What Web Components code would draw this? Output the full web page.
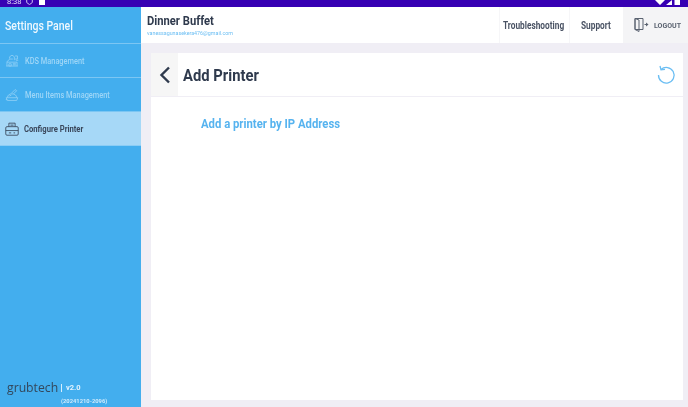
<!DOCTYPE html>
<html>
<head>
<meta charset="utf-8">
<title>Add Printer</title>
<style>
  html, body { margin: 0; height: 100%; }
  body { font-family: Roboto, "Liberation Sans", sans-serif; overflow: hidden; }
</style>
</head>
<body>
<settings-app>
  <status-bar slot="status"></status-bar>
  <side-panel slot="side">
    <side-item icon="kds">KDS Management</side-item>
    <side-item icon="menu">Menu Items Management</side-item>
    <side-item icon="printer" active>Configure Printer</side-item>
  </side-panel>
  <top-bar slot="top"></top-bar>
  <printer-card slot="main"></printer-card>
</settings-app>

<script>
// the reference is a squeezed, slightly soft capture: narrow text uses .nr spans
const NARROW = `.nr { display: inline-block; transform-origin: 0 50%; white-space: nowrap; }`;

class SettingsApp extends HTMLElement {
  connectedCallback() {
    this.attachShadow({ mode: 'open' });
    this.shadowRoot.innerHTML = `
      <style>
        :host { display: grid; grid-template-columns: 141px 1fr; grid-template-rows: 7px 36px 1fr; width: 688px; height: 407px; background: #f0eef5; filter: blur(.35px); }
        .status { grid-column: 1 / 3; }
        .side { grid-row: 2 / 4; display: flex; min-height: 0; }
        .main { display: flex; padding: 10px 5px 7px 10px; min-height: 0; }
      </style>
      <div class="status"><slot name="status"></slot></div>
      <div class="side"><slot name="side"></slot></div>
      <slot name="top"></slot>
      <div class="main"><slot name="main"></slot></div>
    `;
  }
}
customElements.define('settings-app', SettingsApp);

class StatusBar extends HTMLElement {
  connectedCallback() {
    this.attachShadow({ mode: 'open' });
    this.shadowRoot.innerHTML = `
      <style>
        :host { display: flex; height: 7px; background: #3700b3; color: #e6dcf8; justify-content: space-between; align-items: flex-start; overflow: hidden; font-size: 7.500px; line-height: 7px; padding: 0 8px 0 7px; box-sizing: border-box; }
        .left { display: flex; align-items: flex-start; height: 7px; flex: none; }
        .time { width: 19px; margin-top: -2px; }
        svg { display: block; }
        .sq { width: 6px; height: 5px; background: #fff; margin-left: 6px; }
      </style>
      <div class="left">
        <span class="time">8:38</span>
        <svg width="7" height="5" viewBox="0 0 7 5"><path d="M.7 0v2.500L3.500 4.600 6.300 2.500V0" fill="none" stroke="#cdbdf0" stroke-width="1"/></svg>
        <div class="sq"></div>
      </div>
      <svg width="25" height="5" viewBox="0 0 25 5"><path d="M0 0h10L5 5zM11 5l6-5v5zM19.500 0h5.500v5h-5.500z" fill="#fff"/></svg>
    `;
  }
}
customElements.define('status-bar', StatusBar);

class SidePanel extends HTMLElement {
  connectedCallback() {
    this.attachShadow({ mode: 'open' });
    this.shadowRoot.innerHTML = `
      <style>
        ${NARROW}
        :host { display: flex; flex-direction: column; width: 141px; background: #43aeee; color: #fff; }
        h1 { margin: 0; height: 36px; padding-left: 5px; font-size: 12.500px; line-height: 37px; font-weight: 500; color: #eef8fe; border-bottom: 1px solid #7cc6f3; }
        h1 .nr { transform: scaleX(.84); }
        nav { flex: 1; display: flex; flex-direction: column; }
        footer { padding: 0 0 1px 7px; }
        .brand { display: flex; align-items: center; height: 17px; }
        .logo { font-family: "Open Sans", sans-serif; font-size: 13px; color: #33475b; line-height: 17px; width: 53px; display: inline-block; transform: scaleX(.94); transform-origin: 0 50%; }
        .bar { width: 1px; height: 8px; background: #d5eefd; margin: 0 4px 0 1px; }
        .ver { font-size: 7.500px; font-weight: 700; color: #e4f4fe; line-height: 9px; }
        .build { font-size: 5.800px; font-weight: 700; color: #cfeafc; padding-left: 54px; line-height: 9px; margin-top: 1px; }
      </style>
      <h1><span class="nr">Settings Panel</span></h1>
      <nav><slot></slot></nav>
      <footer>
        <div class="brand"><span class="logo">grubtech</span><span class="bar"></span><span class="ver">v2.0</span></div>
        <div class="build">(20241210-2096)</div>
      </footer>
    `;
  }
}
customElements.define('side-panel', SidePanel);

const SIDE_ICONS = {
  kds: '<path d="M1.500 15.500h15M2.500 15.500v-5h13v5M2 10.500l4-4h4M5 12.500h3v3H5zM10 12.500h4M10 14h4M6 6V3.500l3-2 3 2V8M13 2.500h3v4h-3M14 8h3"/>',
  menu: '<path d="M1.500 12.500h15l-1.500 3.500H3zM3 12.500c0-3 2.500-5 6-5s6 2 6 5M8 7l5-5 2 1.500-4 4M5 11c.5-1 1.500-1.500 3-1.500M1 15h2"/>',
  printer: '<path d="M5 6V1.500h8V6M2.500 6h13a1.500 1.500 0 0 1 1.500 1.500v8a1.500 1.500 0 0 1-1.500 1.500h-13A1.500 1.500 0 0 1 1 15.500v-8A1.500 1.500 0 0 1 2.500 6zM1 11h16M7 4h4M5 14h3M11 14h2"/>'
};

class SideItem extends HTMLElement {
  connectedCallback() {
    const active = this.hasAttribute('active');
    this.attachShadow({ mode: 'open' });
    this.shadowRoot.innerHTML = `
      <style>
        ${NARROW}
        :host { display: flex; align-items: center; height: 33px; gap: ${active ? 5 : 6}px; padding-left: 5px; border-bottom: 1px solid ${active ? '#8bcdf5' : '#7cc6f3'}; background: ${active ? '#a6d8f7' : 'transparent'}; color: ${active ? '#39465a' : '#9ed6f7'}; font-size: 8.500px; font-weight: ${active ? 700 : 500}; white-space: nowrap; }
        svg { width: 14px; height: 14px; flex: none; fill: none; stroke: ${active ? '#39465a' : '#8ecff6'}; stroke-width: 1.100; }
        .nr { transform: scaleX(${active ? .9 : .87}); }
      </style>
      <svg viewBox="0 0 18 18">${SIDE_ICONS[this.getAttribute('icon')]}</svg>
      <span class="nr"><slot></slot></span>
    `;
  }
}
customElements.define('side-item', SideItem);

class TopBar extends HTMLElement {
  connectedCallback() {
    this.attachShadow({ mode: 'open' });
    this.shadowRoot.innerHTML = `
      <style>
        ${NARROW}
        :host { display: flex; height: 36px; background: #fff; align-items: stretch; justify-content: space-between; }
        .who { padding-left: 6px; display: flex; flex-direction: column; justify-content: center; }
        .name { font-size: 13.500px; font-weight: 700; color: #2f3a4d; line-height: 17px; }
        .name .nr { transform: scaleX(.83); }
        .mail { font-size: 5.500px; color: #6bbef3; line-height: 9px; }
        .mail .nr { transform: scaleX(.97); }
        .links { display: flex; align-items: stretch; }
        .links a { display: flex; align-items: center; font-size: 10px; font-weight: 700; color: #4a5364; border-left: 1px solid #f6f6f8; }
        .links a .nr { transform: scaleX(.83); }
        .t { width: 70px; padding-left: 3px; box-sizing: border-box; }
        .s { width: 54px; padding-left: 11px; box-sizing: border-box; }
        .links .out { width: 65px; box-sizing: border-box; background: #f4f4f6; font-size: 8px; color: #5a6270; padding-left: 11px; gap: 5px; border: 0; }
        .links .out .nr { transform: scaleX(.88); }
        svg { width: 15px; height: 14px; flex: none; fill: none; stroke: #5a6270; stroke-width: 1; }
      </style>
      <div class="who">
        <div class="name"><span class="nr">Dinner Buffet</span></div>
        <div class="mail"><span class="nr">vanessagunasekera476@gmail.com</span></div>
      </div>
      <div class="links">
        <a class="t"><span class="nr">Troubleshooting</span></a>
        <a class="s"><span class="nr">Support</span></a>
        <a class="out">
          <svg viewBox="0 0 15 14"><path d="M1 .500h8v11H1zM1 .500l4 1.500v11.500l-4-2zM10.500 6.500h2"/><path d="M12 4.500l2.500 2-2.500 2z" fill="#5a6270" stroke="none"/></svg>
          <span class="nr">LOGOUT</span>
        </a>
      </div>
    `;
  }
}
customElements.define('top-bar', TopBar);

class PrinterCard extends HTMLElement {
  connectedCallback() {
    this.attachShadow({ mode: 'open' });
    this.shadowRoot.innerHTML = `
      <style>
        ${NARROW}
        :host { display: flex; flex-direction: column; flex: 1; background: #fff; }
        header { display: flex; align-items: stretch; height: 43px; border-bottom: 1px solid #f0eef5; flex: none; }
        .back { width: 27px; background: #f6f6f6; display: flex; align-items: center; justify-content: center; }
        .back svg { width: 12px; height: 18px; fill: none; stroke: #2f3a4d; stroke-width: 2.400; }
        h2 { margin: 0; flex: 1; padding-left: 5px; font-size: 17px; font-weight: 700; color: #2f3a4d; line-height: 45px; }
        h2 .nr { transform: scaleX(.87); }
        .reload { width: 27px; display: flex; align-items: center; }
        .reload svg { width: 20px; height: 20px; fill: none; stroke: #6bbef3; stroke-width: 1.300; }
        .add { padding: 19px 0 0 50px; font-size: 13px; font-weight: 700; color: #56b3ef; line-height: 16px; }
        .add .nr { transform: scaleX(.87); }
      </style>
      <header>
        <div class="back"><svg viewBox="0 0 12 18"><path d="M10 1.500 2.500 9l7.500 7.500"/></svg></div>
        <h2><span class="nr">Add Printer</span></h2>
        <div class="reload"><svg viewBox="0 0 20 20"><path d="M5 4.500A7.800 7.800 0 1 1 2.500 10"/><path d="M4 1 5 4.800 9 4.400"/></svg></div>
      </header>
      <div class="add"><span class="nr">Add a printer by IP Address</span></div>
    `;
  }
}
customElements.define('printer-card', PrinterCard);
</script>
</body>
</html>
